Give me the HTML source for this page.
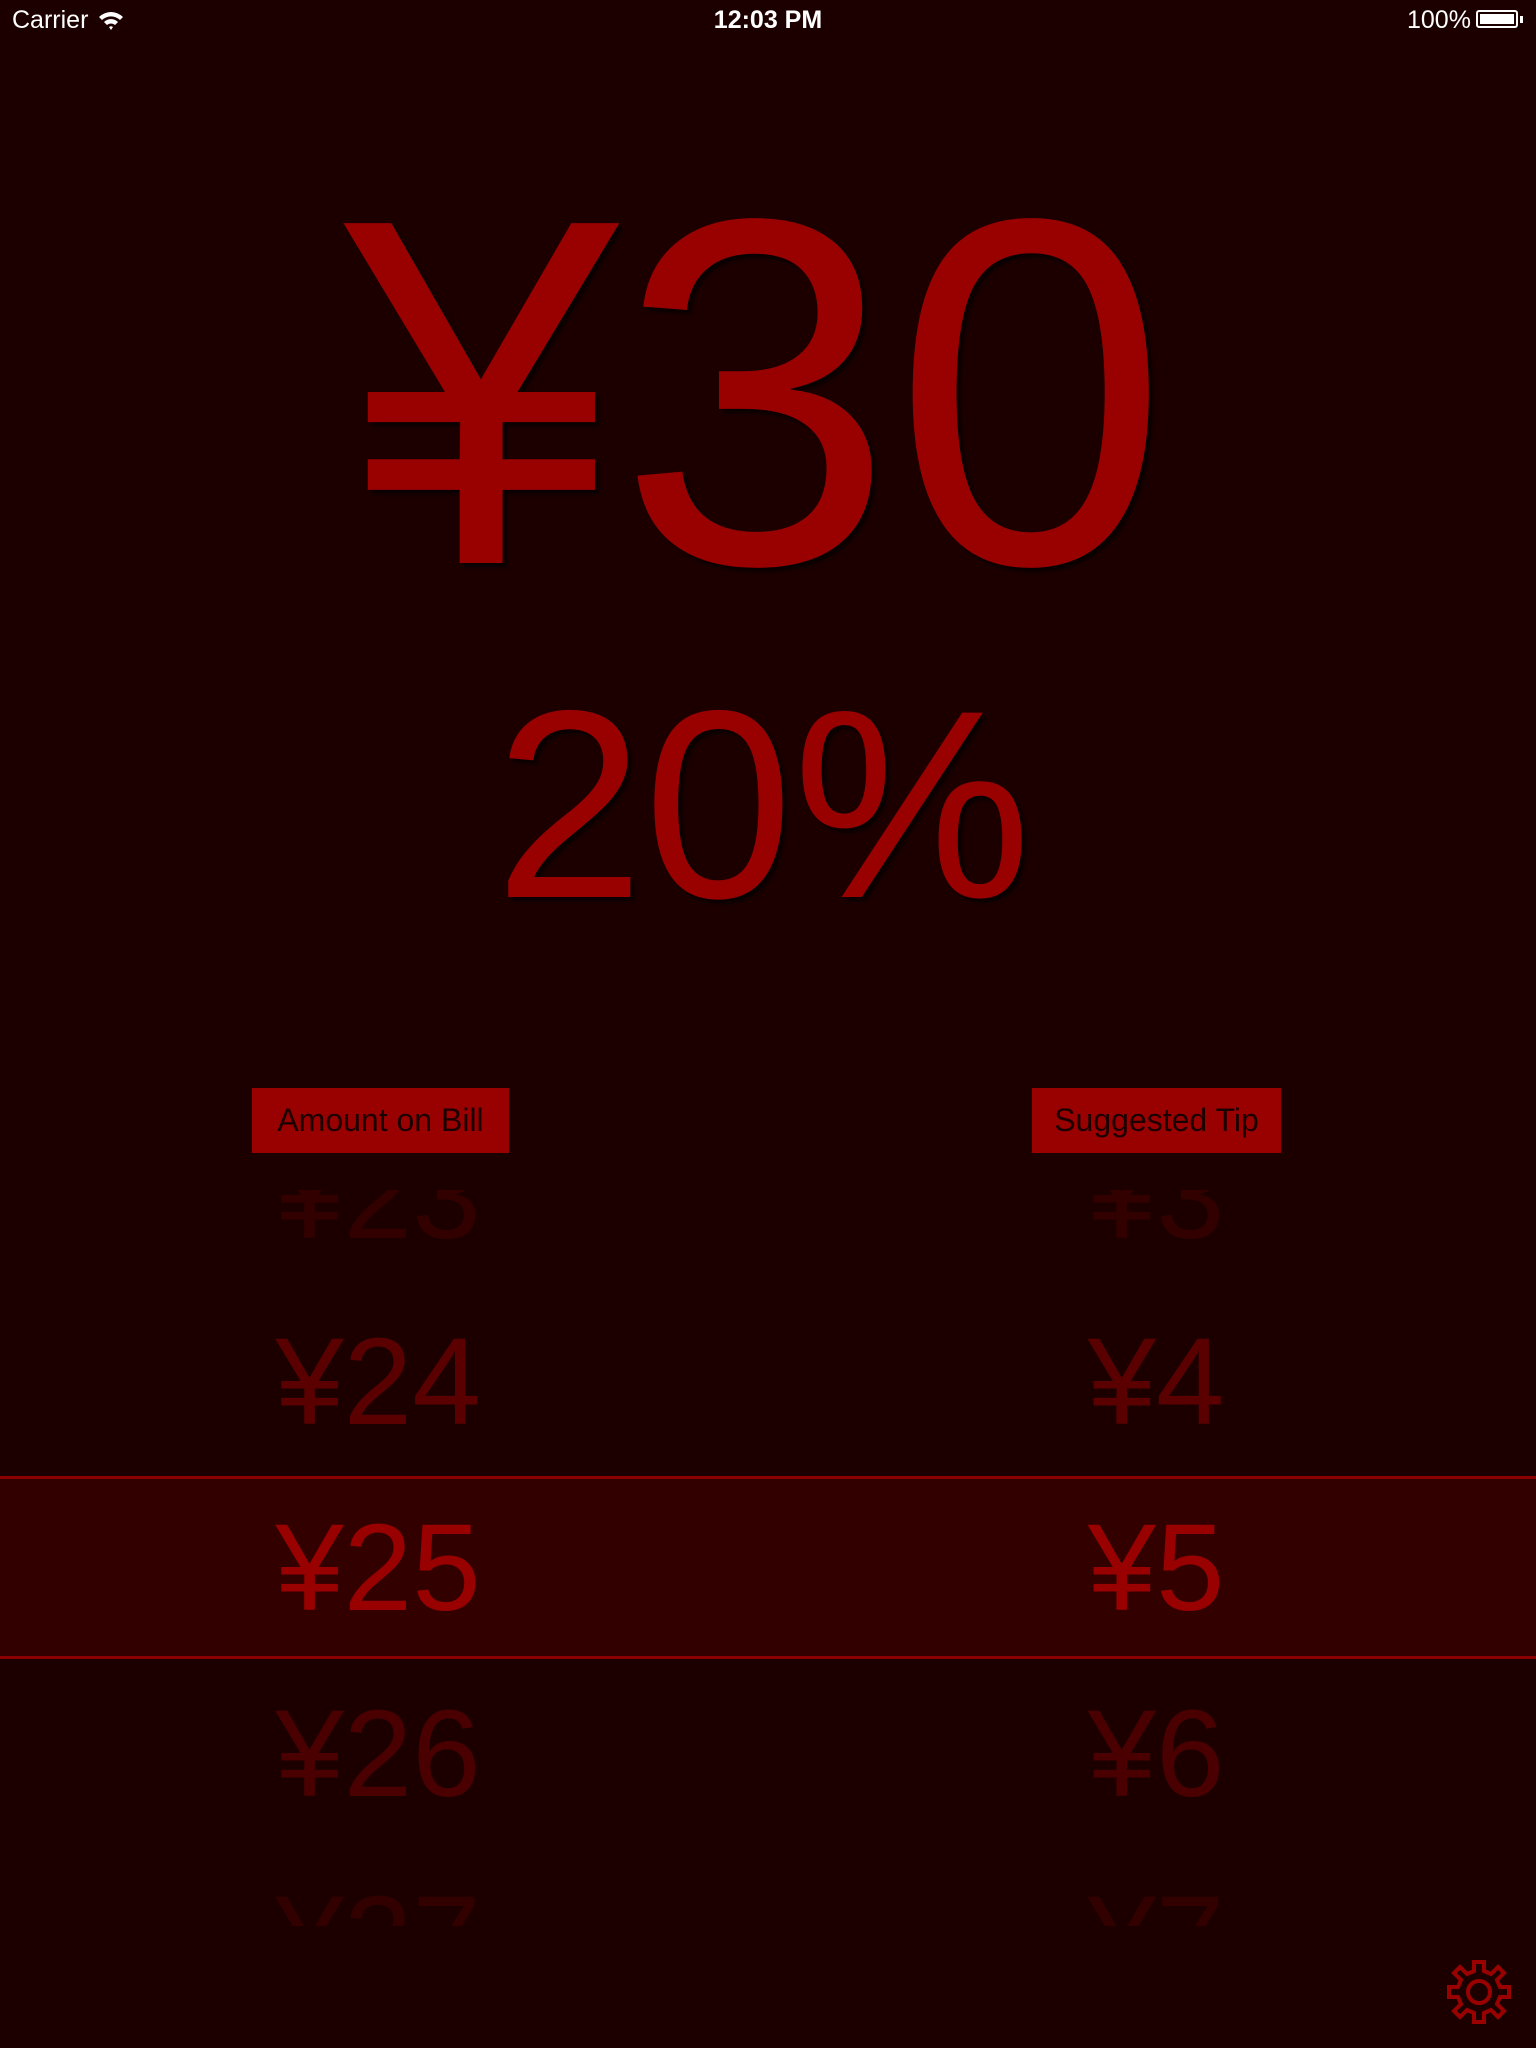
<!DOCTYPE html>
<html><head><meta charset="utf-8"><style>
html,body{margin:0;padding:0;}
body{width:1536px;height:2048px;background:#1c0000;position:relative;overflow:hidden;font-family:"Liberation Sans",sans-serif;}
.abs{position:absolute;line-height:1;white-space:nowrap;}
.sb{color:#fff;font-size:25px;top:8px;}
.big{color:#990000;text-shadow:4px 4px 3px #0a0000;}
.lbl{position:absolute;background:#990000;color:#1c0000;font-size:32px;height:65px;line-height:65px;text-align:center;top:1088px;}
.pick{position:absolute;left:0;top:1190px;width:1536px;height:736px;overflow:hidden;}
.row{position:absolute;font-size:123px;line-height:1;width:400px;text-align:center;}
</style></head><body>
<div class="abs sb" style="left:12px;">Carrier</div>
<svg class="abs" style="left:98px;top:10px" width="26" height="22" viewBox="0 0 26 22"><path d="M1 7 A17 17 0 0 1 25 7 L22 10 A13 13 0 0 0 4 10Z M6 12 A10 10 0 0 1 20 12 L17 15 A6 6 0 0 0 9 15Z M11 17 A3 3 0 0 1 15 17 L13 20Z" fill="#fff"/></svg>
<div class="abs sb" style="left:0;width:1536px;text-align:center;font-weight:bold;">12:03 PM</div>
<div class="abs sb" style="left:1407px;">100%</div>
<div class="abs" style="left:1476px;top:10px;width:42px;height:18px;border:2px solid #fff;border-radius:3px;box-sizing:border-box;padding:2px;"><div style="background:#fff;width:100%;height:100%;"></div></div>
<div class="abs" style="left:1520px;top:16px;width:3px;height:7px;background:#fff;"></div>

<div class="abs big" style="left:0;width:1536px;text-align:center;top:145px;font-size:494px;margin-left:-12px;">¥30</div>
<div class="abs big" style="left:0;width:1536px;text-align:center;top:670px;font-size:268px;margin-left:-5px;">20%</div>

<div class="lbl" style="left:252px;width:257px;">Amount on Bill</div>
<div class="lbl" style="left:1032px;width:249px;">Suggested Tip</div>

<div style="position:absolute;left:0;top:1476px;width:1536px;height:183px;background:#330000;border-top:3px solid #8a0000;border-bottom:3px solid #8a0000;box-sizing:border-box;"></div>
<div class="pick">
<div class="row" style="left:178px;top:-55px;color:#330000">¥23</div>
<div class="row" style="left:178px;top:131px;color:#5a0000">¥24</div>
<div class="row" style="left:178px;top:317px;color:#990000">¥25</div>
<div class="row" style="left:178px;top:503px;color:#4a0000">¥26</div>
<div class="row" style="left:178px;top:689px;color:#330000">¥27</div>
<div class="row" style="left:956px;top:-55px;color:#330000">¥3</div>
<div class="row" style="left:956px;top:131px;color:#5a0000">¥4</div>
<div class="row" style="left:956px;top:317px;color:#990000">¥5</div>
<div class="row" style="left:956px;top:503px;color:#4a0000">¥6</div>
<div class="row" style="left:956px;top:689px;color:#330000">¥7</div>
</div>

<svg class="abs" style="left:1446px;top:1959px" width="66" height="66" viewBox="-33 -33 66 66">
<g fill="none" stroke="#990000" stroke-width="4" stroke-linejoin="miter">
<path d="M-5 -30 L5 -30 L5 -21 L12 -18 L19 -25 L25 -19 L18 -12 L21 -5 L30 -5 L30 5 L21 5 L18 12 L25 19 L19 25 L12 18 L5 21 L5 30 L-5 30 L-5 21 L-12 18 L-19 25 L-25 19 L-18 12 L-21 5 L-30 5 L-30 -5 L-21 -5 L-18 -12 L-25 -19 L-19 -25 L-12 -18 L-5 -21 Z"/>
<circle cx="0" cy="0" r="11"/>
</g></svg>
</body></html>
